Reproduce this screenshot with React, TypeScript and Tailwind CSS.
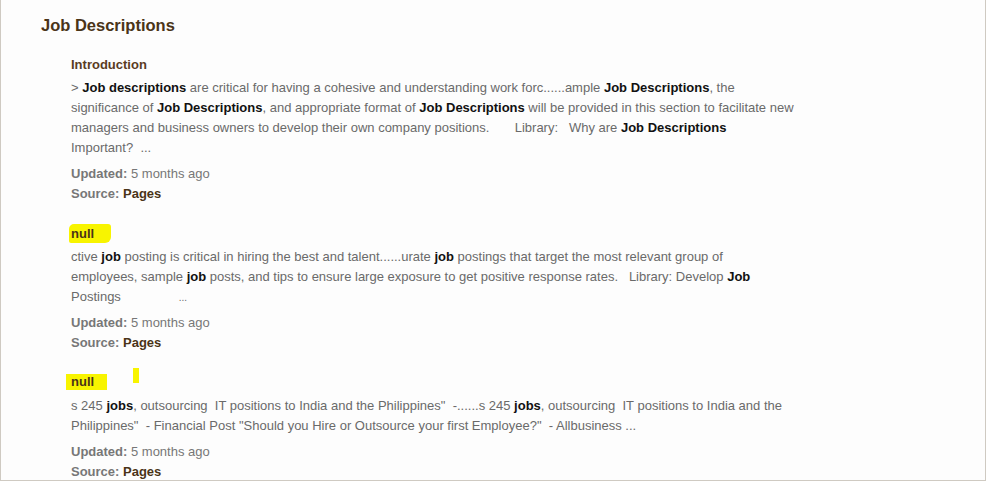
import type { ReactNode } from "react";

type Result = {
  title: string;
  highlight?: "a" | "b";
  body: ReactNode;
};

function B({ children }: { children: ReactNode }) {
  return <b className="font-bold text-[#111]">{children}</b>;
}

const results: Result[] = [
  {
    title: "Introduction",
    body: (
      <>
        &gt; <B>Job descriptions</B> are critical for having a cohesive and understanding work forc......ample{" "}
        <B>Job Descriptions</B>, the
        <br />
        significance of <B>Job Descriptions</B>, and appropriate format of <B>Job Descriptions</B> will be provided in
        this section to facilitate new
        <br />
        managers and business owners to develop their own company positions.{"\u00a0\u00a0\u00a0\u00a0\u00a0\u00a0 "}
        Library:{"\u00a0\u00a0 "}Why are <B>Job Descriptions</B>
        <br />
        Important?{"\u00a0 "}...
      </>
    ),
  },
  {
    title: "null",
    highlight: "a",
    body: (
      <>
        ctive <B>job</B> posting is critical in hiring the best and talent......urate <B>job</B> postings that target
        the most relevant group of
        <br />
        employees, sample <B>job</B> posts, and tips to ensure large exposure to get positive response rates.
        {"\u00a0\u00a0 "}Library: Develop <B>Job</B>
        <br />
        Postings
        {"\u00a0\u00a0\u00a0\u00a0\u00a0\u00a0\u00a0\u00a0\u00a0\u00a0\u00a0\u00a0\u00a0\u00a0\u00a0 "}
        <span className="text-[10px] leading-none">...</span>
      </>
    ),
  },
  {
    title: "null",
    highlight: "b",
    body: (
      <>
        s 245 <B>jobs</B>, outsourcing{"\u00a0 "}IT positions to India and the Philippines"{"\u00a0 "}-......s 245{" "}
        <B>jobs</B>, outsourcing{"\u00a0 "}IT positions to India and the
        <br />
        Philippines"{"\u00a0 "}- Financial Post "Should you Hire or Outsource your first Employee?"{"\u00a0 "}-
        Allbusiness ...
      </>
    ),
  },
];

function Title({ item }: { item: Result }) {
  if (item.highlight === "a") {
    return (
      <div className="relative flex h-[20px] items-center">
        <span className="-ml-[2px] rounded-tl-[5px] rounded-tr-[3px] rounded-br-[6px] rounded-bl-[2px] bg-[#f8f400] pb-[2px] pl-[2px] pr-[17px] pt-[2px] text-[13px] font-bold leading-[15px] text-[#4a3418]">
          {item.title}
        </span>
      </div>
    );
  }
  if (item.highlight === "b") {
    return (
      <div className="relative flex h-[20px] items-center">
        <span className="-ml-[5px] bg-[#f8f400] pl-[5px] pr-[13px] text-[13px] font-bold leading-[16px] text-[#4a3418]">
          {item.title}
        </span>
        <span className="absolute left-[62px] top-[-4px] h-[15px] w-[6px] bg-[#f8f400]" />
      </div>
    );
  }
  return (
    <div className="flex h-[20px] items-center">
      <span className="text-[13px] font-bold text-[#5a3c1f]">{item.title}</span>
    </div>
  );
}

function ResultItem({ item }: { item: Result }) {
  return (
    <div className="mb-[19px]">
      <Title item={item} />
      <p
        className={
          item.highlight
            ? "mt-[4px] w-[760px] text-[13px] leading-[20px] text-[#6a6a6a]"
            : "mt-[3px] w-[760px] text-[13px] leading-[20px] text-[#6a6a6a]"
        }
      >
        {item.body}
      </p>
      <div className="mt-[6px] text-[13px] leading-[20px] text-[#777]">
        <span className="font-bold">Updated:</span> 5 months ago
      </div>
      <div className="text-[13px] leading-[20px] text-[#777]">
        <span className="font-bold">Source:</span> <span className="font-bold text-[#4a3418]">Pages</span>
      </div>
    </div>
  );
}

export default function App() {
  return (
    <div className="h-[482px] w-[986px] overflow-hidden bg-white font-['Liberation_Sans',Arial,sans-serif]">
      <div className="h-[481px] w-[986px] overflow-hidden border-b border-l border-r border-[#cfcac2] bg-[#fdfdfd]">
        <h1 className="pl-[40px] pt-[14px] text-[16.5px] font-bold leading-[22px] text-[#4a3418]">Job Descriptions</h1>
        <div className="pl-[70px] pt-[19px]">
          {results.map((item, i) => (
            <ResultItem key={i} item={item} />
          ))}
        </div>
      </div>
    </div>
  );
}
